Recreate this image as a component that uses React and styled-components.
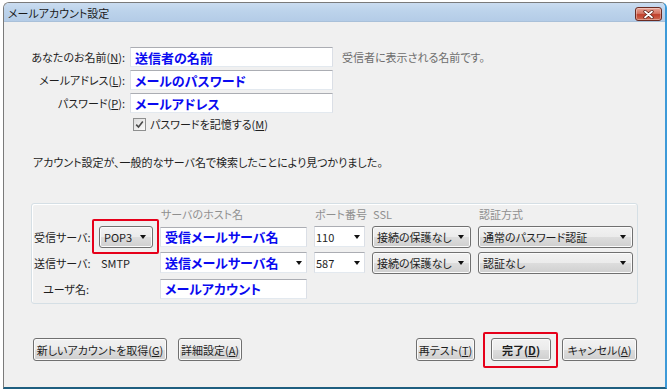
import React from 'react';
import styled, { createGlobalStyle } from 'styled-components';

const FONT = `"Noto Sans CJK JP", "Noto Sans", sans-serif`;

const Global = createGlobalStyle`
  html, body { margin: 0; padding: 0; background: #ffffff; }
  body {
    font-family: ${FONT};
    font-size: 11px;
    color: #1e1e1e;
    font-feature-settings: "palt";
  }
  * { box-sizing: border-box; }
`;

const Window = styled.div`
  margin: 2px 0 0 3px;
  width: 664px;
  height: 387px;
  display: flex;
  flex-direction: column;
  border: 1px solid #7a7a7a;
  border-right: 2px solid #3d9ad8;
  border-bottom: 2px solid #1f5f80;
  border-radius: 6px 6px 0 0;
  background: #f0f0f0;
  overflow: hidden;
`;

const TitleBar = styled.div`
  height: 19px;
  flex: none;
  display: flex;
  align-items: flex-start;
  justify-content: space-between;
  padding: 0 3px 0 4px;
  background: linear-gradient(to bottom, #cadcf0 0%, #bcd3eb 45%, #b4cce7 100%);
  border-bottom: 1px solid #a9c0d9;
`;

const Title = styled.span`
  line-height: 20px;
  font-size: 11px;
  color: #1a1a1a;
`;

const CloseButton = styled.div`
  margin-top: 4px;
  width: 27px;
  height: 14px;
  border: 1px solid #6b2b22;
  border-radius: 3px;
  background: linear-gradient(to bottom, #e8a497 0%, #d47563 45%, #c0402c 55%, #cf6a52 100%);
  display: flex;
  align-items: center;
  justify-content: center;
  box-shadow: inset 0 0 0 1px rgba(255, 255, 255, 0.35);
`;

const Body = styled.div`
  flex: 1;
  display: flex;
  flex-direction: column;
`;

const IdentityForm = styled.div`
  margin-top: 25px;
  display: grid;
  grid-template-columns: 122px 203px 1fr;
  grid-template-rows: 20px 20px 20px 16px;
  column-gap: 4px;
  row-gap: 3px;
  align-items: center;
`;

const FieldLabel = styled.span`
  text-align: right;
  padding-right: 1px;
  line-height: 16px;
  white-space: nowrap;
`;

const Key = styled.span`
  text-decoration: underline;
`;

const TextField = styled.div`
  height: ${(p) => p.$h || 20}px;
  display: flex;
  align-items: center;
  padding: 0 4px;
  background: #ffffff;
  border: 1px solid #dbdfe6;
  border-top-color: #abadb3;
  border-bottom-color: #e3e9ef;
  font-size: 13px;
  font-weight: 700;
  color: #0a0af0;
  white-space: nowrap;
  overflow: hidden;
`;

const ComboField = styled(TextField)`
  justify-content: space-between;
  padding-right: 4px;
  font-size: ${(p) => (p.$plain ? '11px' : '13px')};
  font-weight: ${(p) => (p.$plain ? 400 : 700)};
  color: ${(p) => (p.$plain ? '#1e1e1e' : '#0a0af0')};
  padding-left: ${(p) => (p.$plain ? '1px' : '4px')};
`;

const Hint = styled.span`
  padding-left: 5px;
  color: #6d6d6d;
  white-space: nowrap;
`;

const CheckRow = styled.label`
  grid-column: 2 / 4;
  display: flex;
  align-items: center;
  gap: 4px;
  padding-left: 3px;
  line-height: 16px;
  white-space: nowrap;
`;

const CheckBox = styled.span`
  width: 13px;
  height: 13px;
  flex: none;
  border: 1px solid #8e8f8f;
  background: linear-gradient(135deg, #dcdcdc, #fbfbfb);
  display: flex;
  align-items: center;
  justify-content: center;
`;

const Notice = styled.p`
  margin: 22px 0 0 29px;
  line-height: 16px;
  white-space: nowrap;
`;

const ServerGroup = styled.div`
  margin: 33px 0 0 27px;
  width: 607px;
  border: 1px solid #d5dfe5;
  border-radius: 3px;
  box-shadow: inset 1px 1px 0 #ffffff;
  padding: 1px 4px 3px 2px;
  display: grid;
  grid-template-columns: 58px 54px 147px 51px 99px 155px;
  grid-template-rows: 17px 23px 23px 23px;
  column-gap: 7px;
  row-gap: 3px;
  align-items: center;
`;

const ColumnHead = styled.span`
  grid-column: ${(p) => p.$col};
  padding-left: 1px;
  color: #8f8f8f;
  line-height: 16px;
  white-space: nowrap;
`;

const RowLabel = styled.span`
  text-align: right;
  padding-right: 3px;
  line-height: 16px;
  white-space: nowrap;
`;

const PlainValue = styled.span`
  padding-left: 2px;
  line-height: 16px;
`;

const Button = styled.button`
  height: ${(p) => p.$h || 23}px;
  width: ${(p) => (p.$w ? `${p.$w}px` : p.$combo ? '100%' : 'auto')};
  padding: ${(p) => (p.$combo ? '0 6px 0 4px' : '0 2px')};
  display: flex;
  align-items: center;
  justify-content: ${(p) => (p.$combo ? 'space-between' : 'center')};
  font-family: ${FONT};
  font-size: 11px;
  font-weight: ${(p) => (p.$bold ? 700 : 400)};
  font-feature-settings: "palt";
  color: #1e1e1e;
  white-space: nowrap;
  border: 1px solid #707070;
  border-radius: 3px;
  background: linear-gradient(to bottom, #f2f2f2 0%, #ebebeb 50%, #dddddd 50%, #cfcfcf 100%);
  box-shadow: inset 0 0 0 1px #fbfbfb;
`;

const Arrow = styled.span`
  width: 0;
  height: 0;
  flex: none;
  border-left: 3.5px solid transparent;
  border-right: 3.5px solid transparent;
  border-top: 4px solid #111;
  margin-left: 4px;
`;

const Highlight = styled.div`
  position: relative;
  margin-left: ${(p) => p.$ml || 0}px;
  &::after {
    content: '';
    position: absolute;
    top: ${(p) => p.$t}px;
    bottom: ${(p) => p.$b}px;
    left: ${(p) => p.$l}px;
    right: ${(p) => p.$r}px;
    border: 2px solid #e6001a;
    border-radius: 2px;
    pointer-events: none;
  }
`;

const ButtonBar = styled.div`
  margin-top: 34px;
  display: flex;
  justify-content: space-between;
  padding: 0 28px 0 29px;
`;

const ButtonGroup = styled.div`
  display: flex;
  gap: 11px;
`;

export default function App() {
  return (
    <>
      <Global />
      <Window>
        <TitleBar>
          <Title>メールアカウント設定</Title>
          <CloseButton>
            <svg width="11" height="9" viewBox="0 0 11 9">
              <path d="M2 1.5 L9 7.5 M9 1.5 L2 7.5" stroke="#5a1d14" strokeWidth="3.2" strokeLinecap="round" />
              <path d="M2 1.5 L9 7.5 M9 1.5 L2 7.5" stroke="#ffffff" strokeWidth="1.8" strokeLinecap="round" />
            </svg>
          </CloseButton>
        </TitleBar>
        <Body>
          <IdentityForm>
            <FieldLabel>あなたのお名前(<Key>N</Key>):</FieldLabel>
            <TextField>送信者の名前</TextField>
            <Hint>受信者に表示される名前です。</Hint>

            <FieldLabel>メールアドレス(<Key>L</Key>):</FieldLabel>
            <TextField>メールのパスワード</TextField>
            <span />

            <FieldLabel>パスワード(<Key>P</Key>):</FieldLabel>
            <TextField>メールアドレス</TextField>
            <span />

            <span />
            <CheckRow>
              <CheckBox>
                <svg width="9" height="9" viewBox="0 0 9 9">
                  <path d="M1.2 4.6 L3.5 7 L7.8 1.6" fill="none" stroke="#4a4a4a" strokeWidth="1.6" />
                </svg>
              </CheckBox>
              <span>パスワードを記憶する(<Key>M</Key>)</span>
            </CheckRow>
          </IdentityForm>

          <Notice>アカウント設定が、一般的なサーバ名で検索したことにより見つかりました。</Notice>

          <ServerGroup>
            <ColumnHead $col={3}>サーバのホスト名</ColumnHead>
            <ColumnHead $col={4}>ポート番号</ColumnHead>
            <ColumnHead $col={5}>SSL</ColumnHead>
            <ColumnHead $col={6}>認証方式</ColumnHead>

            <RowLabel>受信サーバ:</RowLabel>
            <Highlight $t={-7} $b={-6} $l={-7} $r={-6}>
              <Button $combo $h={22}>
                <span>POP3</span>
                <Arrow />
              </Button>
            </Highlight>
            <TextField>受信メールサーバ名</TextField>
            <ComboField $plain $h={21}>
              <span>110</span>
              <Arrow />
            </ComboField>
            <Button $combo $h={22}>
              <span>接続の保護なし</span>
              <Arrow />
            </Button>
            <Button $combo $h={22}>
              <span>通常のパスワード認証</span>
              <Arrow />
            </Button>

            <RowLabel>送信サーバ:</RowLabel>
            <PlainValue>SMTP</PlainValue>
            <ComboField $h={21}>
              <span>送信メールサーバ名</span>
              <Arrow />
            </ComboField>
            <ComboField $plain $h={21}>
              <span>587</span>
              <Arrow />
            </ComboField>
            <Button $combo $h={22}>
              <span>接続の保護なし</span>
              <Arrow />
            </Button>
            <Button $combo $h={22}>
              <span>認証なし</span>
              <Arrow />
            </Button>

            <RowLabel>ユーザ名:</RowLabel>
            <span />
            <TextField>メールアカウント</TextField>
          </ServerGroup>

          <ButtonBar>
            <ButtonGroup>
              <Button $w={134}>
                <span>新しいアカウントを取得(<Key>G</Key>)</span>
              </Button>
              <Button $w={64}>
                <span>詳細設定(<Key>A</Key>)</span>
              </Button>
            </ButtonGroup>
            <ButtonGroup>
              <Button $w={59}>
                <span>再テスト(<Key>T</Key>)</span>
              </Button>
              <Highlight $ml={5} $t={-6} $b={-7} $l={-8} $r={-7}>
                <Button $w={60} $bold>
                  <span>完了(<Key>D</Key>)</span>
                </Button>
              </Highlight>
              <Button $w={75}>
                <span>キャンセル(<Key>A</Key>)</span>
              </Button>
            </ButtonGroup>
          </ButtonBar>
        </Body>
      </Window>
    </>
  );
}
